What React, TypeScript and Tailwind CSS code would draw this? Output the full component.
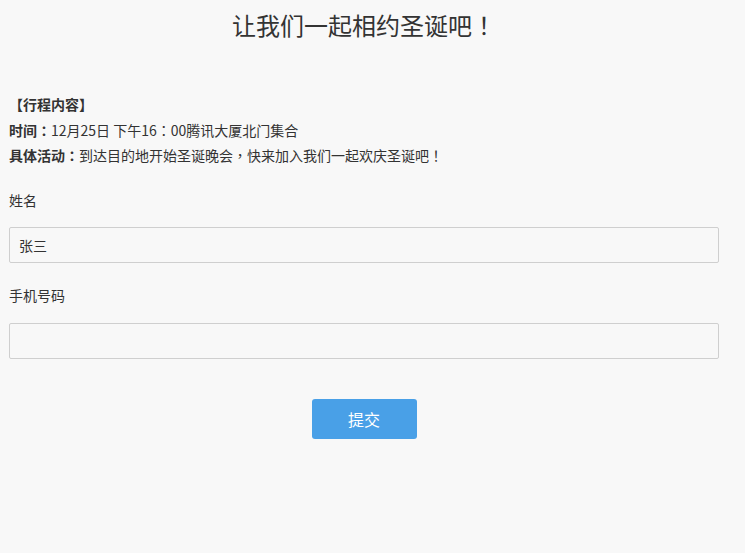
function P({ c }: { c: string }) {
  return <span style={{ fontFamily: '"Noto Sans CJK TC", sans-serif' }}>{c}</span>;
}

export default function App() {
  return (
    <div
      className="min-h-[553px] w-full bg-[#f8f8f8] text-[#333]"
      style={{ fontFamily: '"Noto Sans CJK SC", "Noto Sans", sans-serif' }}
    >
      <div className="w-[728px] px-[9px]">
        <h1 className="pt-[8px] text-center text-[24px] leading-[34px] font-normal text-[#333]">
          让我们一起相约圣诞吧<P c="！" />
        </h1>
        <div className="mt-[50px] text-[14px] leading-[25.5px]">
          <p className="font-bold">【行程内容】</p>
          <p>
            <span className="font-bold">时间<P c="：" /></span>12月25日 下午16<P c="：" />00腾讯大厦北门集合
          </p>
          <p>
            <span className="font-bold">具体活动<P c="：" /></span>到达目的地开始圣诞晚会<P c="，" />快来加入我们一起欢庆圣诞吧<P c="！" />
          </p>
        </div>
        <div className="mt-[21px] flex flex-col">
          <label className="text-[14px] leading-[20px]">姓名</label>
          <input
            className="mt-[17px] h-[36px] w-full rounded-[2px] border border-[#cfcfcf] bg-[#f8f8f8] px-[9px] text-[14px] text-[#333] outline-none"
            defaultValue="张三"
          />
          <label className="mt-[22px] text-[14px] leading-[20px]">手机号码</label>
          <input
            className="mt-[18px] h-[36px] w-full rounded-[2px] border border-[#cfcfcf] bg-[#f8f8f8] px-[9px] text-[14px] text-[#333] outline-none"
          />
        </div>
        <div className="mt-[40px] flex justify-center">
          <button className="h-[40px] w-[105px] rounded-[3px] bg-[#49a0e7] text-[16px] text-white">
            提交
          </button>
        </div>
      </div>
    </div>
  );
}
